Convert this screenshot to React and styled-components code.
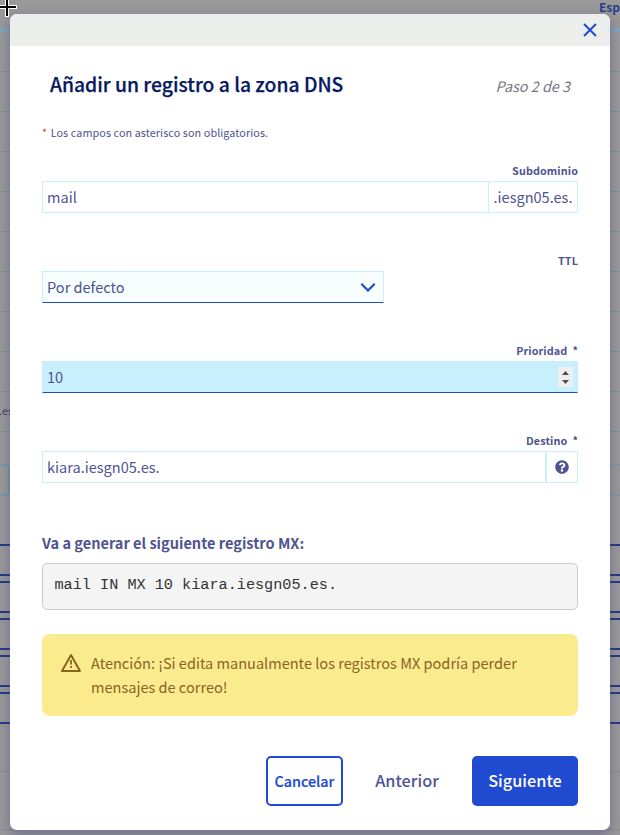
import React from "react";
import styled, { createGlobalStyle } from "styled-components";

const GlobalStyle = createGlobalStyle`
  *, *::before, *::after { box-sizing: border-box; }
  body {
    margin: 0;
    font-family: "Noto Sans CJK JP", "Noto Sans", sans-serif;
    font-size: 14.56px;
    color: #4f5392;
    overflow: hidden;
  }
`;

const Page = styled.div`
  position: relative;
  width: 620px;
  height: 835px;
  overflow: hidden;
  background: #999;
`;

/* Dimmed page behind the dialog */
const Backdrop = styled.div`
  display: flex;
  flex-direction: column;
  height: 100%;
`;

const TopBar = styled.div`
  flex: none;
  height: 32px;
  border-bottom: 4px solid #83a5b5;
  display: flex;
  justify-content: flex-end;
`;

const Language = styled.span`
  flex: none;
  font-size: 12px;
  font-weight: 700;
  line-height: 13px;
  color: #2d3f83;
`;

const TableRow = styled.div`
  flex: none;
  height: 40px;
  border-bottom: 1px solid #7c929c;
  font-size: 11px;
  line-height: 37px;
  text-indent: -1px;
  color: #3e406a;
`;

const SearchArea = styled.div`
  flex: none;
  padding-top: 32px;
  height: 112px;
  display: flex;
  align-items: flex-start;
  justify-content: space-between;
`;

const SearchEdge = styled.div`
  width: 10px;
  height: 32px;
  border: 2px solid #7897a3;
  border-left: 0;
  border-radius: 0 5px 5px 0;
`;

const FilterEdge = styled.div`
  width: 20px;
  height: 32px;
  border: 1px solid #7897a3;
  border-width: 1px 0;
`;

const Records = styled.div`
  flex: none;
  display: flex;
  flex-direction: column;
  gap: 5px;
  height: 227px;
`;

const RecordBox = styled.div`
  flex: none;
  height: 32px;
  border: 2px solid #233983;
  border-width: 2px 0;
`;

const PageFooter = styled.div`
  height: 59px;
  border-top: 1px solid #8c8c90;
  border-bottom: 1px solid #8c8c8c;
`;

const Dialog = styled.section`
  position: absolute;
  left: 10px;
  top: 14px;
  width: 600px;
  height: 816px;
  display: flex;
  flex-direction: column;
  background: #fff;
  border-radius: 7px;
  box-shadow: 0 4px 12px rgba(66, 60, 130, 0.5);
`;

const DialogBar = styled.header`
  flex: none;
  height: 32px;
  border-radius: 7px 7px 0 0;
  background: #eceeeb;
  display: flex;
  align-items: center;
  justify-content: flex-end;
  padding-right: 13px;
`;

const CloseButton = styled.button`
  display: flex;
  padding: 0;
  border: 0;
  background: none;
`;

const Form = styled.form`
  padding: 0 32px;
  display: flex;
  flex-direction: column;
`;

const TitleRow = styled.div`
  height: 76px;
  padding: 0 8px;
  display: flex;
  justify-content: space-between;
  line-height: 77px;
`;

const Title = styled.h1`
  margin: 0;
  font-size: 19.3px;
  font-weight: 500;
  -webkit-text-stroke: 0.25px #061961;
  color: #061961;
  white-space: nowrap;
`;

const Step = styled.em`
  color: #74777f;
  font-size: 14.4px;
  line-height: 80px;
  white-space: nowrap;
`;

const Hint = styled.p`
  margin: 0 0 18px;
  height: 20px;
  font-size: 10.8px;
  line-height: 20px;
  letter-spacing: 0.09px;
`;

const Asterisk = styled.span`
  color: #d8413b;
  margin-right: 3.5px;
`;

const Field = styled.div`
  height: 90px;
  display: flex;
  flex-direction: column;
`;

const Label = styled.label`
  height: 21px;
  text-align: right;
  font-size: 10.8px;
  font-weight: 700;
  line-height: 20px;
  letter-spacing: 0.1px;
  white-space: pre;
`;

const Control = styled.div`
  width: ${(p) => p.$width || "100%"};
  height: 32px;
  display: flex;
  align-items: center;
  justify-content: space-between;
  padding: 0 ${(p) => p.$right || "4px"} 0 4px;
  border: 1px solid #c7effd;
  border-bottom-color: ${(p) => (p.$active ? "#204acf" : "#c7effd")};
  border-radius: 1px;
  background: ${(p) => p.$fill || "#fff"};
  line-height: 30px;
`;

const Group = styled.div`
  display: flex;
`;

const Addon = styled.div`
  flex: none;
  width: ${(p) => p.$width};
  height: 32px;
  display: flex;
  align-items: center;
  justify-content: center;
  border: 1px solid #c7effd;
  border-left-width: ${(p) => (p.$joined ? "0" : "1px")};
  line-height: 30px;
`;

const Spinner = styled.div`
  width: 15px;
  height: 20px;
  background: #efefef;
  display: flex;
`;

const Subtitle = styled.h2`
  margin: 0;
  height: 43px;
  font-size: 14.56px;
  font-weight: 700;
  line-height: 45px;
`;

const RecordPreview = styled.pre`
  margin: 0;
  height: 47px;
  padding: 0 11.5px;
  border: 1px solid #ccc;
  border-radius: 5px;
  background: #f4f4f4;
  color: #333;
  font: 15.2px/42px "Liberation Mono", monospace;
`;

const Warning = styled.div`
  margin-top: 24px;
  height: 82px;
  padding: 18px 18px 0;
  display: flex;
  gap: 9px;
  border-radius: 8px;
  background: #fbeb8f;
  color: #89641f;
  line-height: 24px;
`;

const WarningIcon = styled.svg`
  flex: none;
  width: 22px;
  height: 22px;
`;

const WarningText = styled.p`
  margin: -1px 0 0;
  white-space: nowrap;
`;

const Actions = styled.footer`
  margin-top: 40px;
  height: 50px;
  display: flex;
  justify-content: flex-end;
`;

const Button = styled.button`
  width: ${(p) => p.$width};
  height: 50px;
  padding: 0 0 2px;
  border: 0;
  border-radius: 5px;
  background: none;
  font-family: inherit;
  font-size: 16.3px;
  font-weight: 500;
  line-height: 48px;
  color: #4f5392;
`;

const CancelButton = styled(Button)`
  border: 2px solid #204acf;
  padding: 0;
  font-size: 14.3px;
  line-height: 46px;
  color: #204acf;
  -webkit-text-stroke: 0.2px #204acf;
`;

const PreviousButton = styled(Button)`
  margin: 0 16px 0 15px;
`;

const NextButton = styled(Button)`
  background: #204acf;
  color: #fff;
`;

const Crosshair = styled.svg`
  position: absolute;
  left: 0;
  top: 0;
`;

const tableRows = ["", "", "", "", "", "", "", "", "", ".es"];
const records = [1, 2, 3, 4, 5];

export default function App() {
  return (
    <Page>
      <GlobalStyle />
      <Backdrop>
        <TopBar>
          <Language>Esp</Language>
        </TopBar>
        {tableRows.map((text, i) => (
          <TableRow key={i}>{text}</TableRow>
        ))}
        <SearchArea>
          <SearchEdge />
          <FilterEdge />
        </SearchArea>
        <Records>
          {records.map((id) => (
            <RecordBox key={id} />
          ))}
        </Records>
        <PageFooter />
      </Backdrop>

      <Dialog role="dialog">
        <DialogBar>
          <CloseButton aria-label="Cerrar">
            <svg width="14" height="14" viewBox="0 0 14 14">
              <path d="M1 1L13 13M13 1L1 13" stroke="#204acf" strokeWidth="2" />
            </svg>
          </CloseButton>
        </DialogBar>
        <Form>
          <TitleRow>
            <Title>Añadir un registro a la zona DNS</Title>
            <Step>Paso 2 de 3</Step>
          </TitleRow>
          <Hint>
            <Asterisk>*</Asterisk>Los campos con asterisco son obligatorios.
          </Hint>
          <Field>
            <Label>Subdominio</Label>
            <Group>
              <Control>mail</Control>
              <Addon $width="89px" $joined>.iesgn05.es.</Addon>
            </Group>
          </Field>
          <Field>
            <Label>TTL</Label>
            <Control $width="342px" $right="7px" $fill="#f6feff" $active>
              Por defecto
              <svg width="16" height="10" viewBox="0 0 16 10">
                <path d="M1.3 1.8L8 8.5L14.7 1.8" fill="none" stroke="#204acf" strokeWidth="2.2" />
              </svg>
            </Control>
          </Field>
          <Field>
            <Label>{"Prioridad  *"}</Label>
            <Control $fill="#c7effd" $active>
              10
              <Spinner>
                <svg width="15" height="20" viewBox="0 0 15 20">
                  <path d="M4 8L7.5 4L11 8ZM4 13L7.5 17L11 13Z" fill="#505050" />
                </svg>
              </Spinner>
            </Control>
          </Field>
          <Field>
            <Label>{"Destino  *"}</Label>
            <Group>
              <Control>kiara.iesgn05.es.</Control>
              <Addon $width="32px">
                <svg width="14" height="14" viewBox="0 0 512 512">
                  <path
                    fill="#4f5392"
                    d="M504 256c0 137-111 248-248 248S8 393 8 256C8 119 119 8 256 8s248 111 248 248zM262.7 90c-54.5 0-89.3 23-116.5 63.8-3.5 5.3-2.4 12.4 2.7 16.3l34.7 26.3c5.2 3.9 12.6 3 16.7-2.1 17.9-22.7 30.1-35.8 57.3-35.8 20.4 0 45.7 13.1 45.7 33 0 15-12.4 22.7-32.5 34C247.1 238.5 216 254.9 216 296v4c0 6.6 5.4 12 12 12h56c6.6 0 12-5.4 12-12v-1.3c0-28.5 83.2-29.6 83.2-106.7 0-58-60.2-102-116.5-102zM256 338c-25.4 0-46 20.6-46 46s20.6 46 46 46 46-20.6 46-46-20.6-46-46-46z"
                  />
                </svg>
              </Addon>
            </Group>
          </Field>
          <Subtitle>Va a generar el siguiente registro MX:</Subtitle>
          <RecordPreview>mail IN MX 10 kiara.iesgn05.es.</RecordPreview>
          <Warning>
            <WarningIcon viewBox="0 0 22 22">
              <path d="M11 3L20 19H2Z" fill="none" stroke="#89641f" strokeWidth="2" strokeLinejoin="round" />
              <path d="M11 8V12.5M11 14V16" stroke="#89641f" strokeWidth="1.8" />
            </WarningIcon>
            <WarningText>
              Atención: ¡Si edita manualmente los registros MX podría perder
              <br />
              mensajes de correo!
            </WarningText>
          </Warning>
          <Actions>
            <CancelButton type="button" $width="77px">Cancelar</CancelButton>
            <PreviousButton type="button" $width="98px">Anterior</PreviousButton>
            <NextButton type="button" $width="106px">Siguiente</NextButton>
          </Actions>
        </Form>
      </Dialog>
      <Crosshair width="18" height="18" viewBox="0 0 18 18">
        <path d="M0 7H17M7 0V17" stroke="#fff" strokeWidth="4" />
        <path d="M0 7H16M7 0V16" stroke="#000" strokeWidth="2" />
      </Crosshair>
    </Page>
  );
}
